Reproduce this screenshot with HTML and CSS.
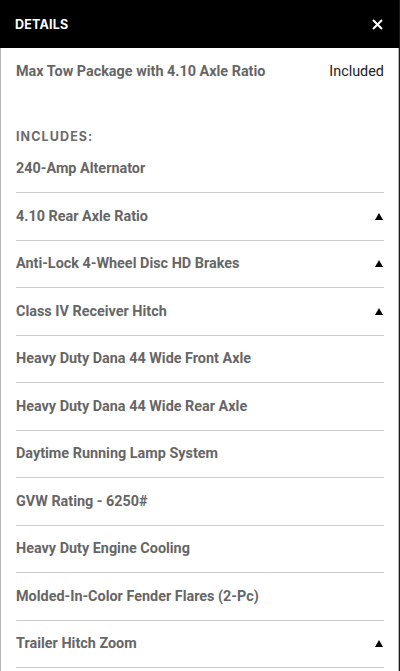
FILE: index.html
```html
<!DOCTYPE html>
<html lang="en">
<head>
  <meta charset="UTF-8">
  <meta name="viewport" content="width=device-width, initial-scale=1">
  <title>Details</title>
  <link rel="stylesheet" href="styles.css">
</head>
<body>
  <div class="panel">
    <div class="panel-head">
      <h6>DETAILS</h6>
      <button class="close" aria-label="Close">
        <svg width="11" height="11" viewBox="0 0 11 11"><path d="M1 1L10 10M10 1L1 10" stroke="#fff" stroke-width="2"/></svg>
      </button>
    </div>
    <div class="panel-body">
      <div class="summary">
        <span class="name">Max Tow Package with 4.10 Axle Ratio</span>
        <span class="value">Included</span>
      </div>
      <div class="includes">INCLUDES:</div>
      <ul class="list">
        <li>240-Amp Alternator</li>
        <li>4.10 Rear Axle Ratio <i class="tri"></i></li>
        <li>Anti-Lock 4-Wheel Disc HD Brakes <i class="tri"></i></li>
        <li>Class IV Receiver Hitch <i class="tri"></i></li>
        <li>Heavy Duty Dana 44 Wide Front Axle</li>
        <li>Heavy Duty Dana 44 Wide Rear Axle</li>
        <li>Daytime Running Lamp System</li>
        <li>GVW Rating - 6250#</li>
        <li>Heavy Duty Engine Cooling</li>
        <li>Molded-In-Color Fender Flares (2-Pc)</li>
        <li>Trailer Hitch Zoom <i class="tri"></i></li>
      </ul>
    </div>
  </div>
</body>
</html>
```
FILE: styles.css
```css
* { margin: 0; padding: 0; box-sizing: border-box; }
html, body {
  height: 100%;
  background: #1a1a1a;
  font-family: Roboto, 'Liberation Sans', sans-serif;
  overflow: hidden;
}
.panel {
  width: 399px;
  height: 100%;
  background: #fff;
  border-left: 1px solid #b5b5b5;
  border-right: 1px solid #b5b5b5;
}
.panel-head {
  height: 48px;
  background: #000;
  display: flex;
  align-items: center;
  justify-content: space-between;
  padding: 0 15px 0 15px;
  margin-left: -1px;
  margin-right: -1px;
}
.panel-head h6 {
  color: #fff;
  font-family: Inter, 'Open Sans', sans-serif;
  font-size: 12.5px;
  font-weight: 700;
  letter-spacing: 0.2px;
  padding-top: 0;
}
.close {
  background: none;
  border: none;
  width: 20px;
  height: 20px;
  display: flex;
  align-items: center;
  justify-content: center;
  margin-right: -3px;
}
.panel-body {
  padding: 0 14px 0 15px;
}
.summary {
  height: 46px;
  display: flex;
  align-items: center;
  justify-content: space-between;
  font-size: 14.4px;
}
.summary .name {
  color: #666;
  font-weight: 700;
}
.summary .value {
  color: #222;
}
.includes {
  margin-top: 34px;
  height: 17.5px;
  line-height: 17.5px;
  font-family: Inter, 'Open Sans', sans-serif;
  font-size: 12.5px;
  font-weight: 700;
  letter-spacing: 1.1px;
  color: #6b6b6b;
}
.list {
  list-style: none;
}
.list li {
  height: 47.5px;
  display: flex;
  align-items: center;
  justify-content: space-between;
  border-bottom: 1px solid #ccc;
  font-size: 14.4px;
  font-weight: 700;
  color: #666;
}
.tri {
  width: 0;
  height: 0;
  border-left: 4px solid transparent;
  border-right: 4px solid transparent;
  border-bottom: 7px solid #000;
  margin-right: 1px;
}
```
